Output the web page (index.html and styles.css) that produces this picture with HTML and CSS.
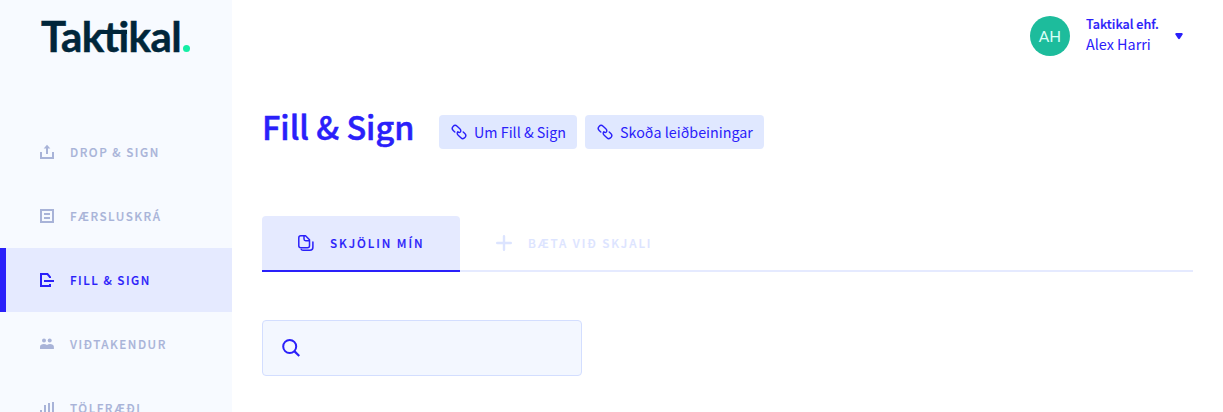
FILE: index.html
```html
<!DOCTYPE html>
<html lang="is">
<head>
<meta charset="utf-8">
<title>Taktikal</title>
<link rel="stylesheet" href="styles.css">
</head>
<body>
<div class="app">
  <aside class="sidebar">
    <div class="logo"><span class="logo-text">Taktikal</span><span class="logo-bar"></span><span class="logo-dot"></span></div>
    <nav class="nav">
      <a class="nav-item"><svg class="nav-icon" viewBox="0 0 14 14"><path d="M1 7v6h12V7" fill="none" stroke="currentColor" stroke-width="2"/><path d="M7 9V2" stroke="currentColor" stroke-width="2"/><path d="M7-.2 10.300 3.600H3.700z" fill="currentColor"/></svg><span class="label">DROP &amp; SIGN</span></a>
      <a class="nav-item"><svg class="nav-icon" viewBox="0 0 14 14"><path d="M1 1h12v12H1zM4 5h6M4 9h6" fill="none" stroke="currentColor" stroke-width="2"/></svg><span class="label">FÆRSLUSKRÁ</span></a>
      <a class="nav-item active"><svg class="nav-icon" viewBox="0 0 14 14"><path d="M10 5V4L7.500 1H1v12h9v-2M4 8h10" fill="none" stroke="currentColor" stroke-width="2"/></svg><span class="label">FILL &amp; SIGN</span></a>
      <a class="nav-item"><svg class="nav-icon" viewBox="0 0 14 14"><g fill="currentColor"><circle cx="4" cy="3.600" r="2"/><circle cx="9.700" cy="3.600" r="2"/><path d="M0 12V9.800C0 8 1.800 7 3.800 7q1.800 0 3.200 1.100Q8.400 7 10 7c2 0 3.900 1 3.900 2.800V12z"/></g></svg><span class="label">VIÐTAKENDUR</span></a>
      <a class="nav-item"><svg class="nav-icon" viewBox="0 0 14 14"><path d="M1 9v5M5 4v10M9 2v12M13 1v13" fill="none" stroke="currentColor" stroke-width="2"/></svg><span class="label">TÖLFRÆÐI</span></a>
    </nav>
  </aside>
  <main class="main">
    <header class="account">
      <div class="avatar">AH</div>
      <div class="who"><span class="company">Taktikal ehf.</span><span class="person">Alex Harri</span></div>
      <svg class="caret" viewBox="0 0 8 7"><path d="M.4 1.400Q0 0 1.400 0h5.200Q8 0 7.600 1.400L5 5.500Q4 7 3 5.500z" fill="currentColor"/></svg>
    </header>
    <div class="heading">
      <h1 class="title">Fill &amp; Sign</h1>
      <a class="chip about"><svg class="chip-icon" viewBox="0 0 16 16"><g fill="none" stroke="currentColor" stroke-width="1.400" stroke-linecap="round"><path d="M3.800 7.900 2.200 6.400a2.800 2.800 0 0 1 3.900-4.100l2.700 2.500q1.700 1.600.6 3.100-1.200 1.100-2.600 0"/><path d="m12.200 8.100 1.600 1.500a2.800 2.800 0 0 1-3.900 4.100l-2.700-2.500q-1.700-1.600-.6-3.100"/></g></svg><span>Um Fill &amp; Sign</span></a>
      <a class="chip guide"><svg class="chip-icon" viewBox="0 0 16 16"><g fill="none" stroke="currentColor" stroke-width="1.400" stroke-linecap="round"><path d="M3.800 7.900 2.200 6.400a2.800 2.800 0 0 1 3.900-4.100l2.700 2.500q1.700 1.600.6 3.100-1.200 1.100-2.600 0"/><path d="m12.200 8.100 1.600 1.500a2.800 2.800 0 0 1-3.900 4.100l-2.700-2.500q-1.700-1.600-.6-3.100"/></g></svg><span>Skoða leiðbeiningar</span></a>
    </div>
    <div class="tabs">
      <a class="tab selected"><svg class="tab-icon" viewBox="0 0 16 16"><g fill="none" stroke="currentColor" stroke-width="1.500" stroke-linecap="round" stroke-linejoin="round"><path d="M2.800.8h4.700l4 4v5.900q0 2-2 2H2.800q-2 0-2-2V2.800q0-2 2-2z"/><path d="M6 1.200v2.900q0 1.700 1.700 1.700h3.500M14.900 7v5.200q0 3-3 3H5.500q-1.500 0-2.200-.8"/></g></svg><span>SKJÖLIN MÍN</span></a>
      <a class="tab"><svg class="tab-icon" viewBox="0 0 16 16"><path d="M8 1.200v13.600M1.200 8h13.600" stroke="currentColor" stroke-width="2.400" stroke-linecap="round"/></svg><span>BÆTA VIÐ SKJALI</span></a>
    </div>
    <div class="search"><svg class="search-icon" viewBox="0 0 18 18"><circle cx="7.700" cy="7.500" r="6.500" fill="none" stroke="currentColor" stroke-width="2"/><path d="m12.300 12.100 5 4.900" stroke="currentColor" stroke-width="2.200"/></svg></div>
  </main>
</div>
</body>
</html>
```
FILE: styles.css
```css
* { box-sizing: border-box; }
body { margin: 0; background: #fff; color: #2a20fa; font-family: "Noto Sans CJK JP", "Noto Sans", sans-serif; }
.app { display: flex; height: 412px; overflow: hidden; }
.sidebar { width: 232px; flex: none; background: #f7faff; overflow: hidden; }
.logo { position: relative; height: 120px; padding: 10px 0 0 41px; font: 700 42px/52px Lato, sans-serif; letter-spacing: -.6px; color: #00263a; -webkit-text-stroke: .5px #00263a; }
.logo-bar { position: absolute; left: 101px; top: 30px; width: 26px; height: 4px; background: #00263a; }
.logo-dot { position: absolute; left: 183px; top: 45px; width: 7px; height: 7px; border-radius: 50%; background: #14eea5; }
.nav-item { display: flex; align-items: center; height: 64px; padding-left: 40px; color: #a8b3d8; }
.nav-item.active { background: #e5eaff; border-left: 6px solid #2a20fa; padding-left: 34px; color: #2a20fa; }
.nav-icon { width: 14px; height: 14px; margin-right: 16px; overflow: visible; }
.label { font-size: 11.7px; line-height: 20px; font-weight: 500; letter-spacing: 1.5px; white-space: nowrap; -webkit-text-stroke: .15px currentColor; }
.main { flex: 1; padding: 0 30px; }
.account { display: flex; align-items: center; justify-content: flex-end; height: 72px; padding-right: 10px; }
.avatar { width: 40px; height: 40px; border-radius: 50%; background: #1dbc9c; color: #d9fff7; font: 400 15.5px/40px Lato, sans-serif; text-align: center; }
.who { width: 73px; margin: 0 16px; padding-bottom: 4px; white-space: nowrap; }
.company, .person { display: block; line-height: 20px; }
.company { font-size: 12.6px; font-weight: 500; -webkit-text-stroke: .2px currentColor; }
.person { font-size: 14.4px; }
.caret { width: 8px; height: 7px; }
.heading { display: flex; height: 144px; padding-top: 43px; }
.title { width: 177px; margin: -2px 0 0; font-size: 32.4px; line-height: 26px; font-weight: 500; white-space: nowrap; -webkit-text-stroke: .5px currentColor; }
.chip { display: flex; align-items: center; height: 34px; margin-right: 8px; padding-left: 12px; border-radius: 4px; background: #e0e8ff; font-size: 14.3px; line-height: 20px; white-space: nowrap; }
.about { width: 138px; }
.guide { width: 179px; }
.chip-icon { width: 16px; height: 16px; margin-right: 7px; }
.tabs { display: flex; height: 56px; border-bottom: 2px solid #e5eaff; }
.tab { display: flex; align-items: center; height: 56px; padding: 0 0 2px 36px; color: #dce4ff; font-size: 11.7px; line-height: 20px; font-weight: 500; letter-spacing: 1.92px; white-space: nowrap; -webkit-text-stroke: .15px currentColor; }
.tab.selected { width: 198px; padding-bottom: 0; border-bottom: 2px solid #2a20fa; border-radius: 4px 4px 0 0; background: #e5eaff; color: #2a20fa; }
.tab-icon { width: 16px; height: 16px; margin-right: 16px; }
.search { display: flex; align-items: center; width: 320px; height: 56px; margin-top: 48px; padding-left: 19px; border: 1px solid #d3deff; border-radius: 4px; background: #f3f7ff; }
.search-icon { width: 18px; height: 18px; }
```
